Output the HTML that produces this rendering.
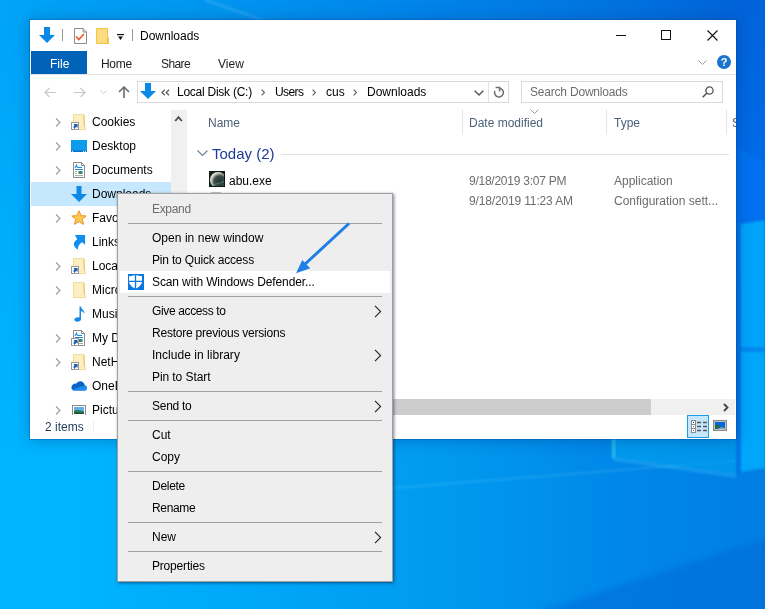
<!DOCTYPE html>
<html><head><meta charset="utf-8">
<style>
*{box-sizing:border-box}
html,body{margin:0;padding:0;width:765px;height:609px;overflow:hidden;font-family:"Liberation Sans",sans-serif;font-size:12px;color:#000}
#bg{position:absolute;left:0;top:0;width:765px;height:609px}
.a{position:absolute;white-space:nowrap}
#win{position:absolute;left:30px;top:20px;width:706px;height:419px;background:#fff;overflow:hidden;box-shadow:0 0 0 1px rgba(0,70,150,0.3),0 1px 14px rgba(0,40,110,0.35)}
#menu{position:absolute;left:117px;top:193px;width:276px;height:389px;background:#eeeeee;border:1px solid #a0a0a0;box-shadow:1px 1px 3px rgba(0,20,60,0.55)}
.mi{position:absolute;left:34px;white-space:nowrap;font-size:12px;color:#000;letter-spacing:-0.15px}
.sep{position:absolute;left:10px;width:254px;height:1px;background:#a0a0a0}
.sub{position:absolute;left:255px;width:6px;height:10px}
.nav{position:absolute;left:62px;white-space:nowrap}
.chev{position:absolute;left:24px}
</style></head><body>
<svg id="bg" width="765" height="609" viewBox="0 0 765 609">
  <defs>
    <linearGradient id="gt" x1="0" y1="0" x2="1" y2="0">
      <stop offset="0" stop-color="#00a4f8"/>
      <stop offset="0.27" stop-color="#0096f0"/>
      <stop offset="0.53" stop-color="#0086ea"/>
      <stop offset="0.79" stop-color="#0074e0"/>
      <stop offset="1" stop-color="#0060d8"/>
    </linearGradient>
    <linearGradient id="gb" x1="0" y1="0" x2="1" y2="0">
      <stop offset="0" stop-color="#00b4ff"/>
      <stop offset="0.1" stop-color="#00b4ff"/>
      <stop offset="0.58" stop-color="#009af0"/>
      <stop offset="0.8" stop-color="#0088e8"/>
      <stop offset="1" stop-color="#007ee4"/>
    </linearGradient>
    <linearGradient id="gv" x1="0" y1="0" x2="0" y2="1">
      <stop offset="0" stop-color="#fff" stop-opacity="0"/>
      <stop offset="0.75" stop-color="#fff" stop-opacity="1"/>
      <stop offset="1" stop-color="#fff" stop-opacity="1"/>
    </linearGradient>
    <mask id="mv"><rect width="765" height="609" fill="url(#gv)"/></mask>
    <filter id="bl" x="-20%" y="-20%" width="140%" height="140%"><feGaussianBlur stdDeviation="1.2"/></filter>
  </defs>
  <rect width="765" height="609" fill="url(#gt)"/>
  <rect width="765" height="609" fill="url(#gb)" mask="url(#mv)"/>
  <path d="M205 0L268 22" stroke="#ffffff" stroke-opacity="0.12" stroke-width="3" filter="url(#bl)"/>
  <!-- right side: sky -->
  <linearGradient id="sky" x1="0" y1="0" x2="0" y2="1"><stop offset="0" stop-color="#0063d9"/><stop offset="1" stop-color="#006ae8"/></linearGradient>
  <path d="M736 0H765V162L736 147z" fill="url(#sky)"/>
  <filter id="bl3" x="-20%" y="-20%" width="140%" height="140%"><feGaussianBlur stdDeviation="3"/></filter>
  <path d="M530 615L775 535V615z" fill="#006cd6" opacity="0.55" filter="url(#bl3)"/>
  <path d="M393 488L736 461" stroke="#bff" stroke-opacity="0.12" stroke-width="2" filter="url(#bl)"/>
  <path d="M736 147L765 162V240H736z" fill="#0070ee"/>
  <g filter="url(#bl)">
  <path d="M741 224L765 220V347H741z" fill="#00a4fa"/>
  <path d="M741 352H765V468L741 472z" fill="#00a6fa"/>
  <path d="M741 347H765V352H741z" fill="#0088f0"/>
  <path d="M736 222H741V475H736z" fill="#0074e6"/>
  <path d="M613 438H736V474L613 457z" fill="#00a8f0" opacity="0.55"/>
  <path d="M613 457L736 474L736 478L613 461z" fill="#30c0f8" opacity="0.35"/>
  <path d="M612 438H615V458H612z" fill="#40d8f0" opacity="0.6"/>
  </g>
</svg>

<div id="win">
  <!-- title bar -->
  <svg class="a" style="left:9px;top:7px" width="16" height="16" viewBox="0 0 16 16"><path d="M5 0h6v8h5l-8 8l-8-8h5z" fill="#0a8ae6"/></svg>
  <div class="a" style="left:32px;top:9px;width:1px;height:12px;background:#999"></div>
  <svg class="a" style="left:44px;top:8px" width="13" height="16" viewBox="0 0 13 16"><path d="M0.5 0.5H9L12.5 4V15.5H0.5z" fill="#fff" stroke="#8c8c8c"/><path d="M9 0.5V4H12.5" fill="none" stroke="#8c8c8c"/><path d="M2 8.5L4.9 11.5L9.9 6" fill="none" stroke="#f05a28" stroke-width="1.7"/></svg>
  <svg class="a" style="left:66px;top:8px" width="14" height="16" viewBox="0 0 14 16"><path d="M0.5 0.5H11.5V8.5L12.5 9.5V15.5H0.5z" fill="#fbdc80" stroke="#f2c24a"/><path d="M11.5 8.5V15.5" stroke="#f2c24a"/></svg>
  <svg class="a" style="left:87px;top:14px" width="7" height="6" viewBox="0 0 7 6"><rect x="0" y="0" width="7" height="1.2" fill="#111"/><path d="M1 2.5H6L3.5 6z" fill="#111"/></svg>
  <div class="a" style="left:102px;top:9px;width:1px;height:12px;background:#999"></div>
  <div class="a" style="left:110px;top:9px;font-size:12px;color:#000;line-height:15px">Downloads</div>
  <div class="a" style="left:586px;top:15px;width:10px;height:1px;background:#111"></div>
  <div class="a" style="left:631px;top:10px;width:10px;height:10px;border:1px solid #111"></div>
  <svg class="a" style="left:677px;top:10px" width="11" height="11" viewBox="0 0 11 11"><path d="M0.5 0.5l10 10M10.5 0.5l-10 10" stroke="#111" stroke-width="1.1"/></svg>
  <!-- ribbon tabs -->
  <div class="a" style="left:1px;top:31px;width:56px;height:23px;background:#0063b8"></div>
  <div class="a" style="left:20px;top:37px;color:#fff;line-height:15px">File</div>
  <div class="a" style="left:71px;top:37px;color:#222;line-height:15px;letter-spacing:-0.3px">Home</div>
  <div class="a" style="left:131px;top:37px;color:#222;line-height:15px;letter-spacing:-0.6px">Share</div>
  <div class="a" style="left:188px;top:37px;color:#222;line-height:15px">View</div>
  <svg class="a" style="left:668px;top:40px" width="9" height="5" viewBox="0 0 9 5"><path d="M0.5 0.5l4 4l4-4" fill="none" stroke="#999" stroke-width="1"/></svg>
  <svg class="a" style="left:687px;top:35px" width="14" height="14" viewBox="0 0 14 14"><circle cx="7" cy="7" r="7" fill="#1a73cc"/><text x="7" y="11" font-size="11" font-weight="bold" text-anchor="middle" fill="#fff" font-family="Liberation Sans">?</text></svg>
  <div class="a" style="left:0;top:54px;width:706px;height:1px;background:#e3e3e3"></div>
  <!-- address row -->
  <svg class="a" style="left:14px;top:67px" width="12" height="11" viewBox="0 0 12 11"><path d="M12 5.5h-11M5.5 1l-4.5 4.5l4.5 4.5" fill="none" stroke="#c8c8c8" stroke-width="1.2"/></svg>
  <svg class="a" style="left:44px;top:67px" width="12" height="11" viewBox="0 0 12 11"><path d="M0 5.5h11M6.5 1l4.5 4.5l-4.5 4.5" fill="none" stroke="#c8c8c8" stroke-width="1.2"/></svg>
  <svg class="a" style="left:70px;top:70px" width="7" height="4" viewBox="0 0 7 4"><path d="M0.5 0.5l3 3l3-3" fill="none" stroke="#c8c8c8"/></svg>
  <svg class="a" style="left:88px;top:66px" width="12" height="12" viewBox="0 0 12 12"><path d="M6 12v-11M1 6l5-5l5 5" fill="none" stroke="#6d6d6d" stroke-width="1.6"/></svg>
  <div class="a" style="left:107px;top:61px;width:372px;height:22px;border:1px solid #d9d9d9"></div>
  <svg class="a" style="left:110px;top:63px" width="16" height="16" viewBox="0 0 16 16"><path d="M5 0h6v8h5l-8 8l-8-8h5z" fill="#0a8ae6"/></svg>
  <svg class="a" style="left:131px;top:69px" width="9" height="7" viewBox="0 0 9 7"><path d="M3.8 0.8L1 3.5L3.8 6.2M8 0.8L5.2 3.5L8 6.2" fill="none" stroke="#555" stroke-width="1.2"/></svg>
  <div class="a" style="left:147px;top:65px;color:#000;line-height:15px;letter-spacing:-0.25px">Local Disk (C:)</div>
  <svg class="a" style="left:231px;top:69px" width="4" height="7" viewBox="0 0 4 7"><path d="M0.6 0.6l2.9 2.9l-2.9 2.9" fill="none" stroke="#606060" stroke-width="1.2"/></svg>
  <div class="a" style="left:245px;top:65px;color:#000;line-height:15px;letter-spacing:-0.6px">Users</div>
  <svg class="a" style="left:282px;top:69px" width="4" height="7" viewBox="0 0 4 7"><path d="M0.6 0.6l2.9 2.9l-2.9 2.9" fill="none" stroke="#606060" stroke-width="1.2"/></svg>
  <div class="a" style="left:296px;top:65px;color:#000;line-height:15px">cus</div>
  <svg class="a" style="left:323px;top:69px" width="4" height="7" viewBox="0 0 4 7"><path d="M0.6 0.6l2.9 2.9l-2.9 2.9" fill="none" stroke="#606060" stroke-width="1.2"/></svg>
  <div class="a" style="left:337px;top:65px;color:#000;line-height:15px">Downloads</div>
  <svg class="a" style="left:444px;top:70px" width="10" height="6" viewBox="0 0 10 6"><path d="M0.7 0.7l4.3 4.3l4.3-4.3" fill="none" stroke="#555" stroke-width="1.4"/></svg>
  <div class="a" style="left:458px;top:62px;width:1px;height:20px;background:#e3e3e3"></div>
  <svg class="a" style="left:463px;top:66px" width="12" height="12" viewBox="0 0 12 12"><path d="M6 2.2A4.4 4.4 0 1 1 1.9 5" fill="none" stroke="#6d6d6d" stroke-width="1.5"/><path d="M2.6 1.5H6.6V5.5" fill="none" stroke="#6d6d6d" stroke-width="1.5"/></svg>
  <div class="a" style="left:491px;top:61px;width:202px;height:22px;border:1px solid #d9d9d9"></div>
  <div class="a" style="left:500px;top:65px;color:#6d6d6d;line-height:15px;letter-spacing:-0.2px">Search Downloads</div>
  <svg class="a" style="left:672px;top:66px" width="12" height="12" viewBox="0 0 12 12"><circle cx="7.5" cy="4.5" r="3.6" fill="none" stroke="#555" stroke-width="1.3"/><path d="M5 7l-4.3 4.3" stroke="#555" stroke-width="1.6"/></svg>
<div class="a" style="left:0;top:90px;width:141px;height:305px;overflow:hidden">
<div class="a" style="left:1px;top:72px;width:140px;height:24px;background:#c6e8fe"></div>
<svg class="a" style="left:25px;top:7px" width="7" height="11" viewBox="0 0 7 11"><path d="M1 1.5l4 4l-4 4" fill="none" stroke="#a0a0a0" stroke-width="1.2"/></svg>
<svg class="a" style="left:41px;top:4px" width="16" height="16" viewBox="0 0 16 16"><path d="M2.5 0.5H12.5V12.5L14.5 13.5V15.5H2.5z" fill="#fcefc2" stroke="#f2dc96"/><path d="M12.5 0.5L13.5 1.5V13" fill="none" stroke="#eccf78"/><rect x="0.5" y="8.5" width="7" height="7" fill="#fff" stroke="#9a9a9a"/><path d="M2.6 10H6.6V14L5.5 12.7C4.5 13.2 4 14 4 15C2.3 14.2 1.9 12.5 3.5 11.3z" fill="#1d5fae"/></svg>
<div class="a" style="left:62px;top:5px;line-height:15px">Cookies</div>
<svg class="a" style="left:25px;top:31px" width="7" height="11" viewBox="0 0 7 11"><path d="M1 1.5l4 4l-4 4" fill="none" stroke="#a0a0a0" stroke-width="1.2"/></svg>
<svg class="a" style="left:41px;top:28px" width="16" height="16" viewBox="0 0 16 16"><rect x="0" y="2" width="16" height="12" fill="#0d9bee"/><rect x="0" y="12.5" width="16" height="1.5" fill="#0b6fc6"/><rect x="1" y="12.8" width="1" height="1" fill="#fff"/><rect x="12" y="12.8" width="1" height="1" fill="#fff"/><rect x="14" y="12.8" width="1" height="1" fill="#fff"/></svg>
<div class="a" style="left:62px;top:29px;line-height:15px">Desktop</div>
<svg class="a" style="left:25px;top:55px" width="7" height="11" viewBox="0 0 7 11"><path d="M1 1.5l4 4l-4 4" fill="none" stroke="#a0a0a0" stroke-width="1.2"/></svg>
<svg class="a" style="left:41px;top:52px" width="16" height="16" viewBox="0 0 16 16"><path d="M2.5 0.5H10.5L13.5 3.5V15.5H2.5z" fill="#fff" stroke="#8c8c8c"/><path d="M10.5 0.5V3.5H13.5" fill="none" stroke="#8c8c8c"/><path d="M4 6L5.5 2.5L6.5 6M4.7 4.6H6.3" fill="none" stroke="#1a86d8" stroke-width="0.9"/><path d="M7 5.5H11M4 7.5H12" stroke="#1a86d8" stroke-width="1"/><path d="M4 9.5H6M4 11.5H6M4 13.5H12" stroke="#9a9a9a" stroke-width="0.8"/><path d="M7.5 9H11.5V12H7.5z" fill="#3a8a6a"/></svg>
<div class="a" style="left:62px;top:53px;line-height:15px">Documents</div>
<svg class="a" style="left:41px;top:76px" width="16" height="16" viewBox="0 0 16 16"><path d="M5.5 0H10.5V8H16L8 16L0 8H5.5z" fill="#0a8ae6"/></svg>
<div class="a" style="left:62px;top:77px;line-height:15px">Downloads</div>
<svg class="a" style="left:25px;top:103px" width="7" height="11" viewBox="0 0 7 11"><path d="M1 1.5l4 4l-4 4" fill="none" stroke="#a0a0a0" stroke-width="1.2"/></svg>
<svg class="a" style="left:41px;top:100px" width="16" height="16" viewBox="0 0 16 16"><path d="M8 0.8L10.1 5.6L15.2 6L11.3 9.3L12.5 14.4L8 11.6L3.5 14.4L4.7 9.3L0.8 6L5.9 5.6z" fill="#fcc850" stroke="#f3902a" stroke-width="1"/></svg>
<div class="a" style="left:62px;top:101px;line-height:15px">Favorites</div>
<svg class="a" style="left:41px;top:124px" width="16" height="16" viewBox="0 0 16 16"><path d="M3.9 1.1H14.1V10.8L11.1 8.2C8.5 9.5 7 12 6.9 15.4C3.5 13.5 2 10.5 3.5 8C4.2 6.8 5.2 5.8 6.2 5.2z" fill="#108ff0"/></svg>
<div class="a" style="left:62px;top:125px;line-height:15px">Links</div>
<svg class="a" style="left:25px;top:151px" width="7" height="11" viewBox="0 0 7 11"><path d="M1 1.5l4 4l-4 4" fill="none" stroke="#a0a0a0" stroke-width="1.2"/></svg>
<svg class="a" style="left:41px;top:148px" width="16" height="16" viewBox="0 0 16 16"><path d="M2.5 0.5H12.5V12.5L14.5 13.5V15.5H2.5z" fill="#fcefc2" stroke="#f2dc96"/><path d="M12.5 0.5L13.5 1.5V13" fill="none" stroke="#eccf78"/><rect x="0.5" y="8.5" width="7" height="7" fill="#fff" stroke="#9a9a9a"/><path d="M2.6 10H6.6V14L5.5 12.7C4.5 13.2 4 14 4 15C2.3 14.2 1.9 12.5 3.5 11.3z" fill="#1d5fae"/></svg>
<div class="a" style="left:62px;top:149px;line-height:15px">Local Settings</div>
<svg class="a" style="left:25px;top:175px" width="7" height="11" viewBox="0 0 7 11"><path d="M1 1.5l4 4l-4 4" fill="none" stroke="#a0a0a0" stroke-width="1.2"/></svg>
<svg class="a" style="left:41px;top:172px" width="16" height="16" viewBox="0 0 16 16"><path d="M2.5 0.5H12.5V12.5L14.5 13.5V15.5H2.5z" fill="#fcefc2" stroke="#f2dc96"/><path d="M12.5 0.5L13.5 1.5V13" fill="none" stroke="#eccf78"/></svg>
<div class="a" style="left:62px;top:173px;line-height:15px">Microsoft</div>
<svg class="a" style="left:41px;top:196px" width="16" height="16" viewBox="0 0 16 16"><path d="M8.5 0.5H10C10.2 3 13.5 4 13.5 8C12.8 6.5 11.5 5.5 10 5.3V13C10 14.8 8.3 15.8 6.5 15.8C4.8 15.8 3.3 15 3.3 13.6C3.3 11.8 5.5 10.8 8.5 11.3z" fill="#1a8ae8"/></svg>
<div class="a" style="left:62px;top:197px;line-height:15px">Music</div>
<svg class="a" style="left:25px;top:223px" width="7" height="11" viewBox="0 0 7 11"><path d="M1 1.5l4 4l-4 4" fill="none" stroke="#a0a0a0" stroke-width="1.2"/></svg>
<svg class="a" style="left:41px;top:220px" width="16" height="16" viewBox="0 0 16 16"><path d="M2.5 0.5H10.5L13.5 3.5V15.5H2.5z" fill="#fff" stroke="#8c8c8c"/><path d="M10.5 0.5V3.5H13.5" fill="none" stroke="#8c8c8c"/><path d="M4 6L5.5 2.5L6.5 6M4.7 4.6H6.3" fill="none" stroke="#1a86d8" stroke-width="0.9"/><path d="M7 5.5H11M4 7.5H12" stroke="#1a86d8" stroke-width="1"/><path d="M4 9.5H6M4 11.5H6M4 13.5H12" stroke="#9a9a9a" stroke-width="0.8"/><path d="M7.5 9H11.5V12H7.5z" fill="#3a8a6a"/><rect x="0.5" y="8.5" width="7" height="7" fill="#fff" stroke="#9a9a9a"/><path d="M2.6 10H6.6V14L5.5 12.7C4.5 13.2 4 14 4 15C2.3 14.2 1.9 12.5 3.5 11.3z" fill="#1d5fae"/></svg>
<div class="a" style="left:62px;top:221px;line-height:15px">My Documents</div>
<svg class="a" style="left:25px;top:247px" width="7" height="11" viewBox="0 0 7 11"><path d="M1 1.5l4 4l-4 4" fill="none" stroke="#a0a0a0" stroke-width="1.2"/></svg>
<svg class="a" style="left:41px;top:244px" width="16" height="16" viewBox="0 0 16 16"><path d="M2.5 0.5H12.5V12.5L14.5 13.5V15.5H2.5z" fill="#fcefc2" stroke="#f2dc96"/><path d="M12.5 0.5L13.5 1.5V13" fill="none" stroke="#eccf78"/><rect x="0.5" y="8.5" width="7" height="7" fill="#fff" stroke="#9a9a9a"/><path d="M2.6 10H6.6V14L5.5 12.7C4.5 13.2 4 14 4 15C2.3 14.2 1.9 12.5 3.5 11.3z" fill="#1d5fae"/></svg>
<div class="a" style="left:62px;top:245px;line-height:15px">NetHood</div>
<svg class="a" style="left:41px;top:268px" width="16" height="16" viewBox="0 0 16 16"><path d="M3.3 12.5H13.3C14.9 12.5 15.9 11.3 15.9 9.9C15.9 8.6 15 7.6 13.8 7.4C13.4 5 11.6 3.2 9.3 3.2C7.5 3.2 6.1 4.2 5.4 5.6C2.7 5.3 0.4 7.2 0.4 9.6C0.4 11.3 1.6 12.5 3.3 12.5z" fill="#0a64c8"/><path d="M3.3 12.5H13.3C14.9 12.5 15.9 11.3 15.9 9.9C15.9 9 15.4 8.2 14.6 7.8C11 8 6.5 9.8 1.2 11.9C1.7 12.3 2.4 12.5 3.3 12.5z" fill="#1c8cf0"/></svg>
<div class="a" style="left:62px;top:269px;line-height:15px">OneDrive</div>
<svg class="a" style="left:25px;top:295px" width="7" height="11" viewBox="0 0 7 11"><path d="M1 1.5l4 4l-4 4" fill="none" stroke="#a0a0a0" stroke-width="1.2"/></svg>
<svg class="a" style="left:41px;top:292px" width="16" height="16" viewBox="0 0 16 16"><rect x="1.5" y="3.5" width="13" height="10" fill="#fff" stroke="#8c8c8c"/><rect x="3" y="5" width="10" height="7" fill="#5fb0e8"/><path d="M3 9C5 7.5 8 7.8 13 9.5V12H3z" fill="#2d7a5a"/><path d="M3 11C6 10.3 9 10.5 13 11.5V12H3z" fill="#1c4f3a"/></svg>
<div class="a" style="left:62px;top:293px;line-height:15px">Pictures</div>
</div>
<div class="a" style="left:141px;top:90px;width:16px;height:305px;background:#f0f0f0"></div>
<svg class="a" style="left:144px;top:95px" width="9" height="7" viewBox="0 0 9 7"><path d="M1.2 6L4.5 2.2L7.8 6" fill="none" stroke="#505050" stroke-width="1.9"/></svg>

<div class="a" style="left:178px;top:96px;color:#4c607a;line-height:15px">Name</div>
<div class="a" style="left:432px;top:89px;width:1px;height:26px;background:#e5e5e5"></div>
<svg class="a" style="left:500px;top:89px" width="9" height="5" viewBox="0 0 9 5"><path d="M0.5 0.5l4 4l4-4" fill="none" stroke="#999"/></svg>
<div class="a" style="left:439px;top:96px;color:#4c607a;line-height:15px">Date modified</div>
<div class="a" style="left:576px;top:89px;width:1px;height:26px;background:#e5e5e5"></div>
<div class="a" style="left:584px;top:96px;color:#4c607a;line-height:15px">Type</div>
<div class="a" style="left:696px;top:89px;width:1px;height:26px;background:#e5e5e5"></div>
<div class="a" style="left:702px;top:96px;color:#4c607a;line-height:15px">S</div>
<svg class="a" style="left:167px;top:130px" width="11" height="7" viewBox="0 0 11 7"><path d="M0.5 0.5l5 5l5-5" fill="none" stroke="#6d7f99" stroke-width="1.1"/></svg>
<div class="a" style="left:182px;top:125px;color:#1e3a9a;font-size:15px;line-height:17px">Today (2)</div>
<div class="a" style="left:251px;top:134px;width:448px;height:1px;background:#e2e2e2"></div>
<svg class="a" style="left:179px;top:151px" width="16" height="16" viewBox="0 0 16 16"><defs><radialGradient id="pl" cx="0.62" cy="0.6" r="0.6"><stop offset="0" stop-color="#203434"/><stop offset="0.6" stop-color="#3a4a48"/><stop offset="0.85" stop-color="#b8b4a8"/><stop offset="1" stop-color="#ece4d8"/></radialGradient></defs><rect width="16" height="16" fill="#142222"/><circle cx="9" cy="9" r="8" fill="url(#pl)"/><path d="M3 14.5C6 13 10 12.5 15 10.5" stroke="#5a9a9a" stroke-width="0.7" fill="none"/><rect x="0.5" y="0.5" width="15" height="15" fill="none" stroke="#0e1818"/></svg>
<div class="a" style="left:199px;top:154px;line-height:15px">abu.exe</div>
<div class="a" style="left:181px;top:172px;width:10px;height:1px;background:#c8c8c8"></div>
<div class="a" style="left:439px;top:154px;color:#6d6d6d;line-height:15px;letter-spacing:-0.25px">9/18/2019 3:07 PM</div>
<div class="a" style="left:584px;top:154px;color:#6d6d6d;line-height:15px">Application</div>
<div class="a" style="left:439px;top:174px;color:#6d6d6d;line-height:15px;letter-spacing:-0.15px">9/18/2019 11:23 AM</div>
<div class="a" style="left:584px;top:174px;color:#6d6d6d;line-height:15px">Configuration sett...</div>
<!-- h scrollbar -->
<div class="a" style="left:157px;top:379px;width:548px;height:16px;background:#f0f0f0"></div>
<div class="a" style="left:157px;top:379px;width:464px;height:16px;background:#cdcdcd"></div>
<svg class="a" style="left:693px;top:383px" width="6" height="9" viewBox="0 0 6 9"><path d="M1 1l3.5 3.5l-3.5 3.5" fill="none" stroke="#444" stroke-width="1.8"/></svg>
<!-- status bar -->
<div class="a" style="left:15px;top:400px;color:#1e395b;line-height:15px">2 items</div>
<div class="a" style="left:63px;top:401px;width:1px;height:11px;background:#f0f0f0"></div>
<div class="a" style="left:657px;top:395px;width:22px;height:23px;background:#c6e6fb;border:1px solid #1a9ee8"></div>
<svg class="a" style="left:660px;top:399px" width="18" height="15" viewBox="0 0 18 15"><rect x="1.5" y="1.5" width="4" height="12" fill="#fff" stroke="#8a8a8a"/><path d="M1.5 5.5H5.5M1.5 9.5H5.5" stroke="#8a8a8a"/><rect x="3" y="3" width="1" height="1" fill="#444"/><rect x="3" y="7" width="1" height="1" fill="#2a8a9a"/><rect x="3" y="11" width="1" height="1" fill="#e82020"/><path d="M7 3.5H11M13 3.5H17M7 7.5H11M13 7.5H17M7 11.5H11M13 11.5H17" stroke="#555" stroke-width="1.3"/></svg>
<svg class="a" style="left:683px;top:400px" width="14" height="11" viewBox="0 0 14 11"><rect x="0.75" y="0.75" width="12.5" height="9.5" fill="#fff" stroke="#8a8a8a" stroke-width="1.5"/><defs><linearGradient id="sky" x1="0" y1="0" x2="0" y2="1"><stop offset="0" stop-color="#3a8ee8"/><stop offset="1" stop-color="#b0d8f0"/></linearGradient></defs><rect x="2" y="2" width="10" height="7" fill="url(#sky)"/><path d="M2 5C4 4 6 5 8 7L2 9z" fill="#2a6a40"/><path d="M5 9C7 7 9 7 12 8V9z" fill="#7aa8b0"/></svg>
</div>

<div id="menu">
<div class="mi" style="top:8px;color:#6d6d6d;line-height:15px;letter-spacing:-0.33px">Expand</div>
<div class="sep" style="top:29px"></div>
<div class="mi" style="top:37px;color:#000;line-height:15px;letter-spacing:0.04px">Open in new window</div>
<div class="mi" style="top:59px;color:#000;line-height:15px;letter-spacing:-0.18px">Pin to Quick access</div>
<div class="a" style="left:2px;top:77px;width:270px;height:22px;background:#fff"></div>
<svg class="a" style="left:10px;top:80px" width="16" height="16" viewBox="0 0 16 16"><rect width="16" height="16" fill="#0a78de"/><path d="M1 2.2Q4.3 2 7.5 1Q10.7 2 14 2.2V8.2Q12.8 12.3 7.5 14.8Q2.2 12.3 1 8.2z" fill="#fff"/><path d="M7.5 1V15M0.5 7.4H14.5" stroke="#0a78de" stroke-width="1.3"/></svg>
<div class="mi" style="top:81px;color:#000;line-height:15px;letter-spacing:-0.12px">Scan with Windows Defender...</div>
<div class="sep" style="top:102px"></div>
<div class="mi" style="top:110px;color:#000;line-height:15px;letter-spacing:-0.36px">Give access to</div>
<svg class="a" style="left:256px;top:111px" width="8" height="13" viewBox="0 0 8 13"><path d="M1 0.8l5.6 5.7l-5.6 5.7" fill="none" stroke="#222" stroke-width="1.1"/></svg>
<div class="mi" style="top:132px;color:#000;line-height:15px;letter-spacing:-0.22px">Restore previous versions</div>
<div class="mi" style="top:154px;color:#000;line-height:15px;letter-spacing:0.03px">Include in library</div>
<svg class="a" style="left:256px;top:155px" width="8" height="13" viewBox="0 0 8 13"><path d="M1 0.8l5.6 5.7l-5.6 5.7" fill="none" stroke="#222" stroke-width="1.1"/></svg>
<div class="mi" style="top:176px;color:#000;line-height:15px;letter-spacing:-0.08px">Pin to Start</div>
<div class="sep" style="top:197px"></div>
<div class="mi" style="top:205px;color:#000;line-height:15px;letter-spacing:-0.27px">Send to</div>
<svg class="a" style="left:256px;top:206px" width="8" height="13" viewBox="0 0 8 13"><path d="M1 0.8l5.6 5.7l-5.6 5.7" fill="none" stroke="#222" stroke-width="1.1"/></svg>
<div class="sep" style="top:226px"></div>
<div class="mi" style="top:234px;color:#000;line-height:15px;letter-spacing:0px">Cut</div>
<div class="mi" style="top:256px;color:#000;line-height:15px;letter-spacing:0px">Copy</div>
<div class="sep" style="top:277px"></div>
<div class="mi" style="top:285px;color:#000;line-height:15px;letter-spacing:-0.28px">Delete</div>
<div class="mi" style="top:307px;color:#000;line-height:15px;letter-spacing:-0.35px">Rename</div>
<div class="sep" style="top:328px"></div>
<div class="mi" style="top:336px;color:#000;line-height:15px;letter-spacing:0px">New</div>
<svg class="a" style="left:256px;top:337px" width="8" height="13" viewBox="0 0 8 13"><path d="M1 0.8l5.6 5.7l-5.6 5.7" fill="none" stroke="#222" stroke-width="1.1"/></svg>
<div class="sep" style="top:357px"></div>
<div class="mi" style="top:365px;color:#000;line-height:15px;letter-spacing:-0.19px">Properties</div>
</div>
<svg class="a" style="left:0;top:0" width="765" height="609" viewBox="0 0 765 609"><path d="M349 223.5L303 266" stroke="#1f7fe6" stroke-width="3" fill="none"/><path d="M296 273.2L302.3 259.9L310.2 268.3z" fill="#1f7fe6"/></svg>


</body></html>
